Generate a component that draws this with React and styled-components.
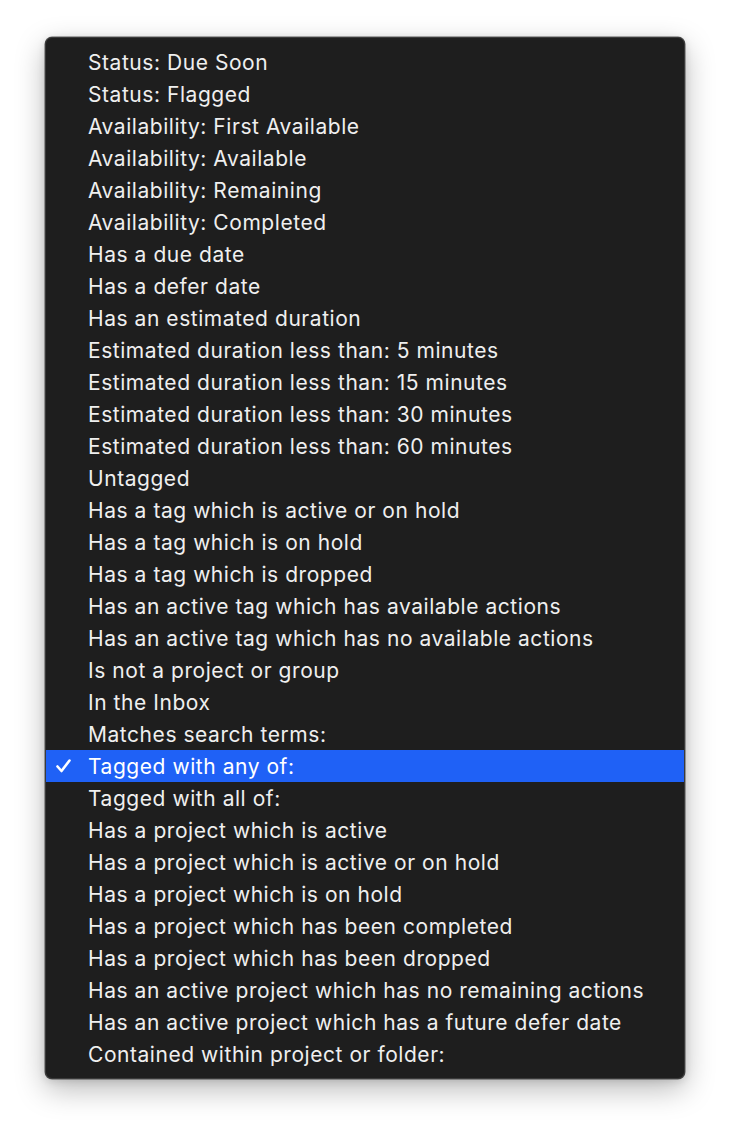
import React from "react";
import styled, { createGlobalStyle } from "styled-components";

const Global = createGlobalStyle`
  html, body { margin: 0; padding: 0; background: #ffffff; }
  body { width: 730px; height: 1132px; overflow: hidden; }
`;

const Page = styled.div`
  width: 730px;
  height: 1132px;
  box-sizing: border-box;
  padding: 37px 45px 0 45px;
  background: #ffffff;
`;

const Menu = styled.div`
  box-sizing: border-box;
  width: 640px;
  padding: 8px 0;
  background: #1e1e1e;
  border: 1px solid #3a3a3a;
  border-radius: 7px;
  box-shadow: 0 0 0 0.5px rgba(0,0,0,0.6), 0 10px 30px rgba(0,0,0,0.28), 0 2px 8px rgba(0,0,0,0.12);
  display: flex;
  flex-direction: column;
`;

const Item = styled.div`
  height: 32px;
  display: flex;
  align-items: center;
  padding-left: 42px;
  position: relative;
  font-family: Inter, "Liberation Sans", sans-serif;
  font-size: 21px;
  letter-spacing: 0.55px;
  color: #efefef;
  white-space: nowrap;
  background: ${(p) => (p.$selected ? "#1f61f6" : "transparent")};
  ${(p) => p.$selected && "color: #ffffff;"}
`;

const Check = styled.svg`
  position: absolute;
  left: 10px;
  top: 9px;
  width: 15px;
  height: 14px;
`;

const items = [
  "Status: Due Soon",
  "Status: Flagged",
  "Availability: First Available",
  "Availability: Available",
  "Availability: Remaining",
  "Availability: Completed",
  "Has a due date",
  "Has a defer date",
  "Has an estimated duration",
  "Estimated duration less than: 5 minutes",
  "Estimated duration less than: 15 minutes",
  "Estimated duration less than: 30 minutes",
  "Estimated duration less than: 60 minutes",
  "Untagged",
  "Has a tag which is active or on hold",
  "Has a tag which is on hold",
  "Has a tag which is dropped",
  "Has an active tag which has available actions",
  "Has an active tag which has no available actions",
  "Is not a project or group",
  "In the Inbox",
  "Matches search terms:",
  "Tagged with any of:",
  "Tagged with all of:",
  "Has a project which is active",
  "Has a project which is active or on hold",
  "Has a project which is on hold",
  "Has a project which has been completed",
  "Has a project which has been dropped",
  "Has an active project which has no remaining actions",
  "Has an active project which has a future defer date",
  "Contained within project or folder:",
];

export default function App() {
  return (
    <>
      <Global />
      <Page>
        <Menu>
          {items.map((t) => {
            const sel = t === "Tagged with any of:";
            return (
              <Item key={t} $selected={sel}>
                {sel && (
                  <Check viewBox="0 0 15 14">
                    <path d="M1.5 7.5 L5.5 12 L13.5 1.5" fill="none" stroke="#fff" strokeWidth="2.6" strokeLinecap="round" strokeLinejoin="round" />
                  </Check>
                )}
                {t}
              </Item>
            );
          })}
        </Menu>
      </Page>
    </>
  );
}
